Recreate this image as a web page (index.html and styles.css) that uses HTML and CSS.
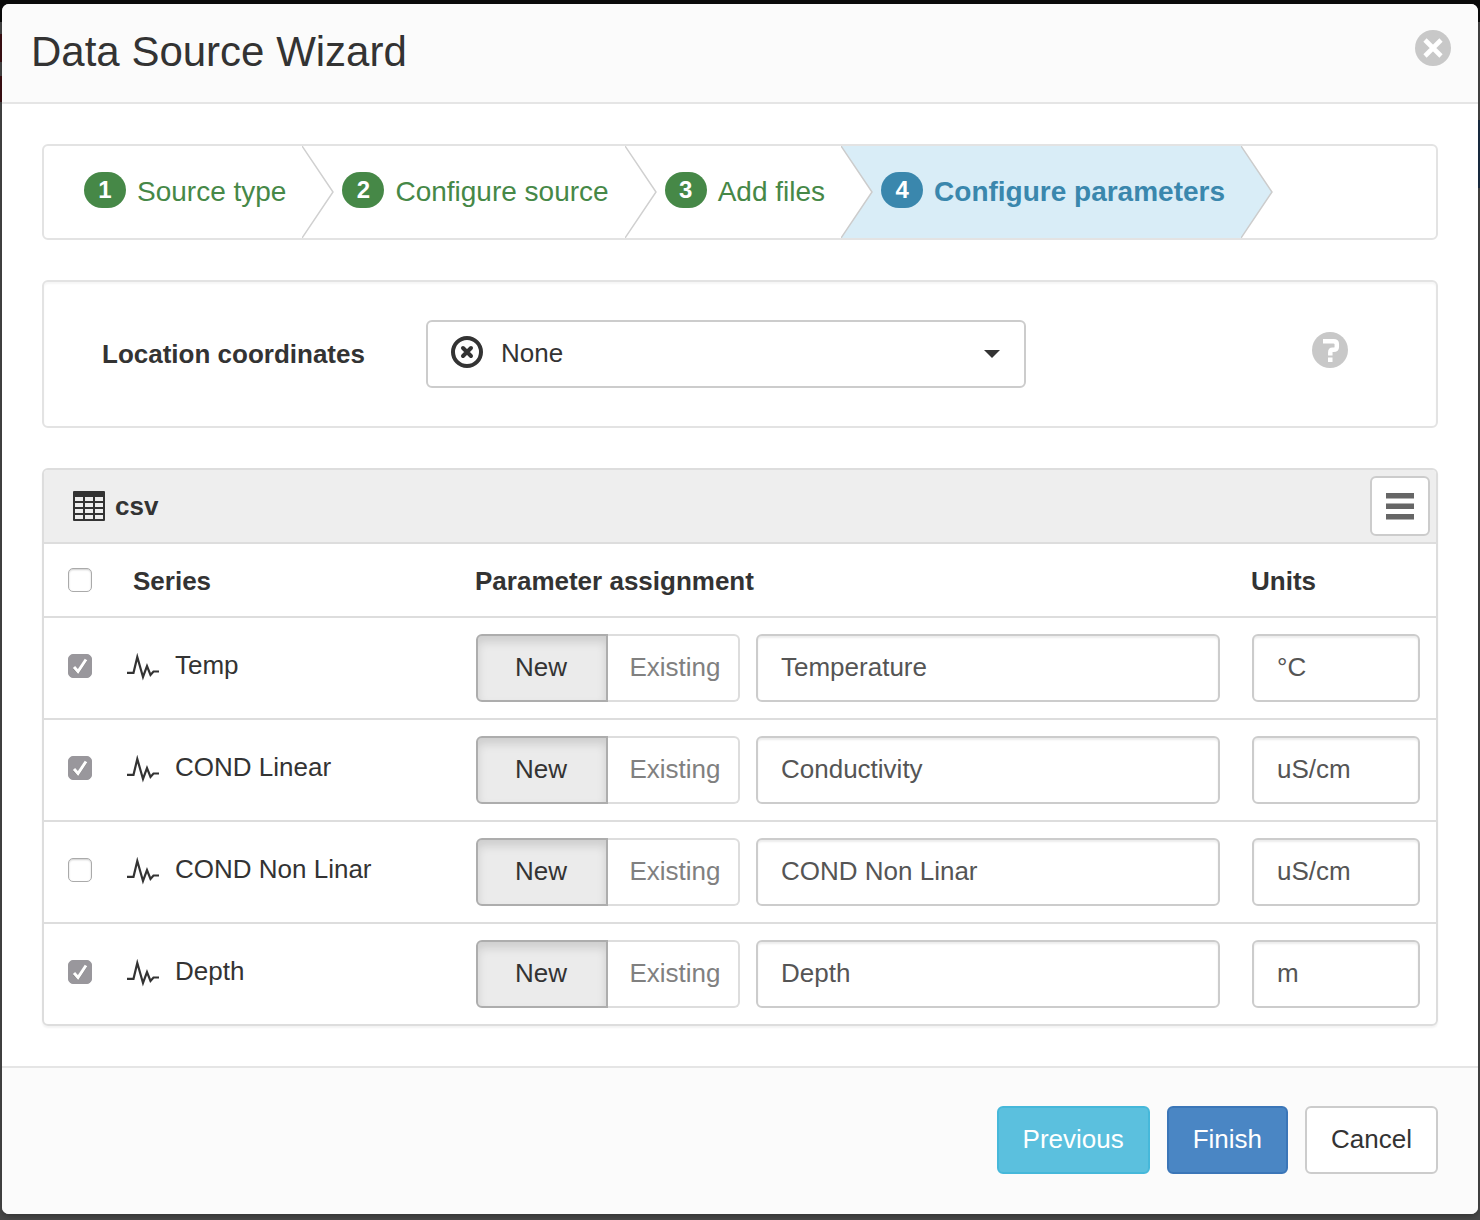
FILE: index.html
```html
<!DOCTYPE html>
<html lang="en">
<head>
<meta charset="utf-8">
<title>Data Source Wizard</title>
<link rel="stylesheet" href="styles.css">
</head>
<body>
<svg width="0" height="0" class="sprite" aria-hidden="true">
  <symbol id="wave" viewBox="0 0 32 28">
    <path d="M0 19.800H6.500L10.300 4L16 24L20 13L23.500 22L26.500 18.500H32" fill="none" stroke="#333" stroke-width="2.200" stroke-miterlimit="10"/>
  </symbol>
</svg>
<main class="modal" role="dialog" aria-labelledby="title">
  <header class="modal-header">
    <h1 class="modal-title" id="title">Data Source Wizard</h1>
    <button class="icon-button" type="button" aria-label="Close">
      <svg width="36" height="36" viewBox="0 0 36 36"><circle cx="18" cy="18" r="18" fill="#c8c8c8"/><path d="M10 10L26 26M26 10L10 26" stroke="#fff" stroke-width="4.600"/></svg>
    </button>
  </header>

  <div class="modal-body">
    <ol class="steps">
      <li class="step done"><span class="badge">1</span><span class="step-name">Source type</span>
        <svg class="chevron" viewBox="0 0 32 92"><path d="M0 0L31 46L0 92" fill="none" stroke="#d0d0d0" stroke-width="1.500"/></svg></li>
      <li class="step done"><span class="badge">2</span><span class="step-name">Configure source</span>
        <svg class="chevron" viewBox="0 0 32 92"><path d="M0 0L31 46L0 92" fill="none" stroke="#d0d0d0" stroke-width="1.500"/></svg></li>
      <li class="step done"><span class="badge">3</span><span class="step-name">Add files</span>
        <svg class="chevron" viewBox="0 0 32 92"><path d="M0 0H32V92H0L31 46Z" fill="#d9edf7"/><path d="M0 0L31 46L0 92" fill="none" stroke="#ccc" stroke-width="1.500"/></svg></li>
      <li class="step active" aria-current="step"><span class="badge">4</span><span class="step-name">Configure parameters</span>
        <svg class="chevron" viewBox="0 0 32 92"><path d="M0 0L31 46L0 92Z" fill="#d9edf7"/><path d="M0 0L31 46L0 92" fill="none" stroke="#ccc" stroke-width="1.500"/></svg></li>
    </ol>

    <section class="well">
      <label class="well-label" for="coords">Location coordinates</label>
      <div class="picker">
        <select id="coords" class="picker-select"><option>None</option></select>
        <svg class="picker-icon" width="32" height="32" viewBox="0 0 32 32"><circle cx="16" cy="16" r="14" fill="none" stroke="#333" stroke-width="4"/><path d="M12 12L20 20M20 12L12 20" stroke="#333" stroke-width="4" stroke-linecap="round"/></svg>
        <svg class="picker-caret" width="16" height="8" viewBox="0 0 16 8"><path d="M0 0H16L8 8Z" fill="#333"/></svg>
      </div>
      <button class="icon-button help" type="button" aria-label="Help">
        <svg width="36" height="36" viewBox="0 0 36 36"><circle cx="18" cy="18" r="18" fill="#c8c8c8"/><path d="M11 9.300H21.500Q24.800 9.300 24.800 12V15Q24.800 17.800 21.500 17.800H20.500Q18.300 17.800 18.300 20.500V23.500" fill="none" stroke="#fff" stroke-width="4.500"/><rect x="16" y="25.500" width="4.500" height="4.500" fill="#fff"/></svg>
      </button>
    </section>

    <section class="panel">
      <header class="panel-header">
        <svg width="32" height="30" viewBox="0 0 32 30"><path fill="#333" fill-rule="evenodd" d="M1 0H31Q32 0 32 1V29Q32 30 31 30H1Q0 30 0 29V1Q0 0 1 0ZM2 6V10H10V6ZM12 6V10H20V6ZM22 6V10H30V6ZM2 12V16H10V12ZM12 12V16H20V12ZM22 12V16H30V12ZM2 18V22H10V18ZM12 18V22H20V18ZM22 18V22H30V18ZM2 24V28H10V24ZM12 24V28H20V24ZM22 24V28H30V24Z"/></svg>
        <h2 class="panel-title">csv</h2>
        <button class="menu-button" type="button" aria-label="Menu">
          <svg width="28" height="28" viewBox="0 0 28 28"><path d="M0 1H28V6.500H0ZM0 11.500H28V17H0ZM0 22H28V27.500H0Z" fill="#666"/></svg>
        </button>
      </header>
      <table class="params">
        <colgroup><col class="col-check"><col class="col-series"><col><col class="col-units"></colgroup>
        <thead>
          <tr>
            <th class="cell-check"><input type="checkbox" class="check" aria-label="Select all series"></th>
            <th class="head-series" scope="col">Series</th>
            <th scope="col">Parameter assignment</th>
            <th scope="col">Units</th>
          </tr>
        </thead>
        <tbody>
          <tr>
            <td class="cell-check"><input type="checkbox" class="check" id="s1" checked></td>
            <td><label class="series" for="s1"><svg width="32" height="28"><use href="#wave"/></svg>Temp</label></td>
            <td><div class="assign"><div class="toggle"><button type="button" class="toggle-item on" aria-pressed="true">New</button><button type="button" class="toggle-item" aria-pressed="false">Existing</button></div><input class="field" type="text" value="Temperature" aria-label="Temp parameter"></div></td>
            <td><input class="field" type="text" value="°C" aria-label="Temp units"></td>
          </tr>
          <tr>
            <td class="cell-check"><input type="checkbox" class="check" id="s2" checked></td>
            <td><label class="series" for="s2"><svg width="32" height="28"><use href="#wave"/></svg>COND Linear</label></td>
            <td><div class="assign"><div class="toggle"><button type="button" class="toggle-item on" aria-pressed="true">New</button><button type="button" class="toggle-item" aria-pressed="false">Existing</button></div><input class="field" type="text" value="Conductivity" aria-label="COND Linear parameter"></div></td>
            <td><input class="field" type="text" value="uS/cm" aria-label="COND Linear units"></td>
          </tr>
          <tr>
            <td class="cell-check"><input type="checkbox" class="check" id="s3"></td>
            <td><label class="series" for="s3"><svg width="32" height="28"><use href="#wave"/></svg>COND Non Linar</label></td>
            <td><div class="assign"><div class="toggle"><button type="button" class="toggle-item on" aria-pressed="true">New</button><button type="button" class="toggle-item" aria-pressed="false">Existing</button></div><input class="field" type="text" value="COND Non Linar" aria-label="COND Non Linar parameter"></div></td>
            <td><input class="field" type="text" value="uS/cm" aria-label="COND Non Linar units"></td>
          </tr>
          <tr>
            <td class="cell-check"><input type="checkbox" class="check" id="s4" checked></td>
            <td><label class="series" for="s4"><svg width="32" height="28"><use href="#wave"/></svg>Depth</label></td>
            <td><div class="assign"><div class="toggle"><button type="button" class="toggle-item on" aria-pressed="true">New</button><button type="button" class="toggle-item" aria-pressed="false">Existing</button></div><input class="field" type="text" value="Depth" aria-label="Depth parameter"></div></td>
            <td><input class="field" type="text" value="m" aria-label="Depth units"></td>
          </tr>
        </tbody>
      </table>
    </section>
  </div>

  <footer class="modal-footer">
    <button type="button" class="btn btn-info">Previous</button>
    <button type="button" class="btn btn-primary">Finish</button>
    <button type="button" class="btn">Cancel</button>
  </footer>
</main>
</body>
</html>
```

FILE: styles.css
```css
*, *::before, *::after { box-sizing: border-box; }

body {
  margin: 0;
  min-height: 100vh;
  padding: 4px 2px 6px;
  background:
    linear-gradient(transparent 34px, #3d1013 34px, #3d1013 62px, transparent 62px, transparent 76px, #3d1013 76px, #3d1013 102px, transparent 102px) 0 0 / 50% 100% no-repeat,
    linear-gradient(transparent 120px, #1b2f45 120px, #1b2f45 188px, transparent 188px) 100% 0 / 50% 100% no-repeat,
    linear-gradient(#0b0b0b 22px, #484848 22px);
  color: #333;
  font: 26px/36px "Helvetica Neue", "Liberation Sans", Arial, sans-serif;
}

button, input, select { font: inherit; color: inherit; margin: 0; }

.sprite { position: absolute; }

.modal {
  background: #fff;
  border-radius: 7px;
  overflow: hidden;
  box-shadow: 0 2px 6px rgba(0, 0, 0, .3);
}

.modal-header {
  display: flex;
  align-items: flex-start;
  justify-content: space-between;
  padding: 20px 27px 22px 29px;
  background: #fbfbfb;
  border-bottom: 2px solid #e5e5e5;
}

.modal-title { margin: 0; font-size: 42px; line-height: 56px; font-weight: 400; }

.icon-button { display: block; margin-top: 6px; padding: 0; border: 0; background: none; line-height: 0; }

.modal-body { display: flex; flex-direction: column; gap: 40px; padding: 40px; }

.steps {
  display: flex;
  margin: 0;
  padding: 0 0 0 32px;
  list-style: none;
  border: 2px solid #e3e3e3;
  border-radius: 6px;
  font-size: 28px;
}

.step { display: flex; align-items: center; height: 92px; padding-left: 8px; white-space: nowrap; }
.done { color: #468847; }
.active { color: #3a87ad; background: linear-gradient(#d9edf7, #d9edf7) no-repeat 0 0 / calc(100% - 32px) 100%; font-weight: 700; }

.badge {
  min-width: 42px;
  margin-right: 11px;
  margin-bottom: 4px;
  border-radius: 18px;
  background: currentColor;
  font-size: 24px;
  line-height: 36px;
  font-weight: 700;
  text-align: center;
}
.badge::first-line { color: #fff; }

.step-name { margin-right: 16px; }
.chevron { display: block; flex: none; width: 32px; height: 92px; }

.well {
  display: flex;
  align-items: center;
  padding: 38px 88px 38px 58px;
  border: 2px solid #e3e3e3;
  border-radius: 6px;
  box-shadow: inset 0 2px 2px rgba(0, 0, 0, .04);
}

.well-label { width: 324px; font-weight: 700; }

.picker { display: grid; align-items: center; flex: 0 1 600px; }
.picker > * { grid-area: 1 / 1; }
.picker-select {
  width: 100%;
  height: 68px;
  padding: 0 50px 2px 73px;
  border: 2px solid #ccc;
  border-radius: 6px;
  background: #fff;
  appearance: none;
}
.picker-icon { margin: 0 0 4px 25px; pointer-events: none; }
.picker-caret { justify-self: end; margin-right: 26px; pointer-events: none; }

.help { margin: 0 0 8px auto; }

.panel {
  border: 2px solid #ddd;
  border-radius: 6px;
  overflow: hidden;
  box-shadow: 0 2px 2px rgba(0, 0, 0, .05);
}

.panel-header {
  display: flex;
  align-items: center;
  gap: 10px;
  height: 74px;
  padding: 0 6px 0 29px;
  background: #eee;
  border-bottom: 2px solid #ddd;
}
.panel-title { margin: 0; font-size: 26px; line-height: 36px; }

.menu-button {
  display: grid;
  place-items: center;
  width: 60px;
  height: 60px;
  margin-left: auto;
  padding: 0;
  border: 2px solid #ccc;
  border-radius: 6px;
  background: #fff;
}

.params { width: 100%; table-layout: fixed; border-collapse: separate; border-spacing: 0; }
.col-check { width: 67px; }
.col-series { width: 349px; }
.col-units { width: 200px; }

.params th { height: 72px; padding: 2px 15px 0; text-align: left; }
.params td { height: 102px; padding: 0 16px; border-top: 2px solid #ddd; }
.params .cell-check { padding: 0 0 0 24px; }
.params .head-series { padding-left: 22px; }
.params td.cell-check { padding-bottom: 4px; }

.check {
  display: block;
  width: 24px;
  height: 24px;
  border: 1px solid #aaa;
  border-radius: 5px;
  background: #fff;
  box-shadow: inset 0 1px 2px rgba(0, 0, 0, .2);
  appearance: none;
}
.check:checked {
  border-color: #99979c;
  background: #99979c url("data:image/svg+xml,%3Csvg xmlns='http://www.w3.org/2000/svg' viewBox='0 0 22 22'%3E%3Cpath d='M5 13L9 17L17 5' fill='none' stroke='%23777' stroke-width='3'/%3E%3Cpath d='M5 12L9 16.500L17 4.500' fill='none' stroke='%23fff' stroke-width='3'/%3E%3C/svg%3E") center / 22px 22px no-repeat;
  box-shadow: none;
}

.series { display: flex; align-items: center; gap: 16px; padding-bottom: 6px; }
.series svg { flex: none; margin-top: 4px; }

.assign { display: flex; gap: 16px; }
.toggle { display: flex; flex: none; }
.toggle-item {
  width: 132px;
  height: 68px;
  padding: 0 0 2px 4px;
  border: 2px solid #ddd;
  border-left: 0;
  border-radius: 0 6px 6px 0;
  background: #fff;
  color: #808080;
}
.toggle-item.on {
  padding: 0 2px 2px 0;
  border: 2px solid #adadad;
  border-radius: 6px 0 0 6px;
  background: #ebebeb;
  color: #333;
  box-shadow: inset 0 6px 10px rgba(0, 0, 0, .125);
}

.field {
  display: block;
  width: 100%;
  min-width: 0;
  height: 68px;
  padding: 0 23px 2px;
  border: 2px solid #ccc;
  border-radius: 6px;
  background: #fff;
  color: #555;
  box-shadow: inset 0 2px 2px rgba(0, 0, 0, .075);
}

.modal-footer {
  display: flex;
  justify-content: flex-end;
  gap: 17px;
  padding: 38px 40px 40px;
  background: #fbfbfb;
  border-top: 2px solid #e5e5e5;
}

.btn {
  height: 68px;
  padding: 0 24px 2px;
  border: 2px solid #ccc;
  border-radius: 6px;
  background: #fff;
}
.btn-info { border-color: #46b8da; background: #5bc0de; color: #fff; }
.btn-primary { border-color: #3b76b8; background: #4a86c4; color: #fff; }
```
